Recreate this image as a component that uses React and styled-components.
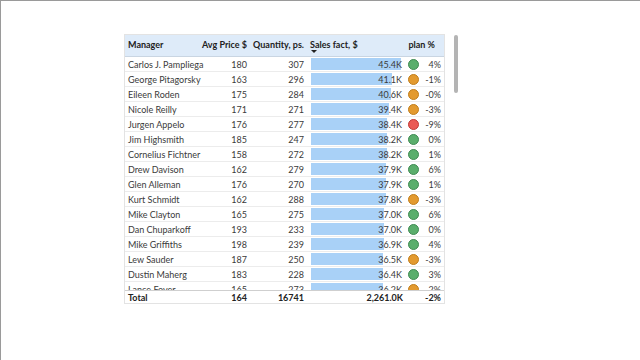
import React from "react";
import styled, { createGlobalStyle } from "styled-components";

const Global = createGlobalStyle`
  html, body { margin: 0; padding: 0; background: #fff; }
  body { font-family: Lato, "Liberation Sans", sans-serif; }
`;

const Page = styled.div`
  width: 640px;
  height: 360px;
  box-sizing: border-box;
  border-top: 1px solid #9a9a9a;
  border-left: 1px solid #9a9a9a;
  padding: 33px 0 0 123px;
  display: flex;
  align-items: flex-start;
  gap: 9px;
`;

const Table = styled.div`
  width: 319px;
  border: 1px solid #e3e3e3;
  font-size: 9px;
  line-height: 1;
  color: #3a3a3a;
`;

const cols = "72px 53px 57px 99px 14px 24px";

const HeadRow = styled.div`
  display: grid;
  grid-template-columns: ${cols};
  height: 21px;
  background: #deebf9;
  border-bottom: 1px solid #c9d5e2;
  font-weight: 700;
  color: #222;
`;

const HeadCell = styled.div`
  display: flex;
  align-items: flex-start;
  padding-top: 5px;
  grid-column: span ${(p) => p.span || 1};
  justify-content: ${(p) => (p.right ? "flex-end" : "flex-start")};
  padding-left: ${(p) => (p.right ? 0 : 3)}px;
  padding-right: ${(p) => (p.right ? p.pr || 3 : 0)}px;
  position: relative;
  white-space: nowrap;
`;

const SortArrow = styled.span`
  position: absolute;
  left: 4px;
  bottom: 3px;
  width: 0;
  height: 0;
  border-left: 3px solid transparent;
  border-right: 3px solid transparent;
  border-top: 3px solid #222;
`;

const Body = styled.div`
  height: 233px;
  overflow: hidden;
`;

const Row = styled.div`
  display: grid;
  grid-template-columns: ${cols};
  height: 15px;
  box-sizing: border-box;
  border-bottom: 1px solid #ececec;
`;

const Cell = styled.div`
  display: flex;
  align-items: center;
  justify-content: ${(p) => (p.right ? "flex-end" : "flex-start")};
  padding: ${(p) => (p.right ? "0 3px 0 0" : "0 0 0 3px")};
  white-space: nowrap;
`;

const BarCell = styled.div`
  position: relative;
  display: flex;
  align-items: center;
  justify-content: flex-end;
  padding-right: 4px;
`;

const Bar = styled.div`
  position: absolute;
  left: 4px;
  top: 1px;
  height: 12px;
  background: #a9d1f7;
`;

const BarText = styled.span`
  position: relative;
`;

const DotCell = styled.div`
  display: flex;
  align-items: center;
  justify-content: center;
`;

const Dot = styled.span`
  width: 11px;
  height: 11px;
  border-radius: 50%;
  box-sizing: border-box;
  background: ${(p) => p.color};
  border: 1px solid ${(p) => p.edge};
`;

const TotalRow = styled.div`
  display: grid;
  grid-template-columns: ${cols};
  height: 12px;
  border-top: 1px solid #cfcfcf;
  font-weight: 700;
  color: #222;
`;

const Scroll = styled.div`
  width: 4px;
  height: 58px;
  margin-top: 1px;
  border-radius: 2px;
  background: #b4b4b4;
`;

const dots = {
  g: ["#5aae6c", "#3f8a52"],
  o: ["#e39a2f", "#c07e1c"],
  r: ["#ea5a55", "#bf3a36"],
};

const rows = [
  ["Carlos J. Pampliega", 180, 307, 45.4, "g", "4%"],
  ["George Pitagorsky", 163, 296, 41.1, "o", "-1%"],
  ["Eileen Roden", 175, 284, 40.6, "o", "-0%"],
  ["Nicole Reilly", 171, 271, 39.4, "o", "-3%"],
  ["Jurgen Appelo", 176, 277, 38.4, "r", "-9%"],
  ["Jim Highsmith", 185, 247, 38.2, "g", "0%"],
  ["Cornelius Fichtner", 158, 272, 38.2, "g", "1%"],
  ["Drew Davison", 162, 279, 37.9, "g", "6%"],
  ["Glen Alleman", 176, 270, 37.9, "g", "1%"],
  ["Kurt Schmidt", 162, 288, 37.8, "o", "-3%"],
  ["Mike Clayton", 165, 275, 37.0, "g", "6%"],
  ["Dan Chuparkoff", 193, 233, 37.0, "g", "0%"],
  ["Mike Griffiths", 198, 239, 36.9, "g", "4%"],
  ["Lew Sauder", 187, 250, 36.5, "o", "-3%"],
  ["Dustin Maherg", 183, 228, 36.4, "g", "3%"],
  ["Lance Foyer", 165, 273, 36.2, "o", "-2%"],
];

export default function App() {
  return (
    <>
      <Global />
      <Page>
        <Table>
          <HeadRow>
            <HeadCell>Manager</HeadCell>
            <HeadCell right>Avg Price $</HeadCell>
            <HeadCell right>Quantity, ps.</HeadCell>
            <HeadCell>
              Sales fact, $
              <SortArrow />
            </HeadCell>
            <HeadCell right span={2} pr={9}>plan %</HeadCell>
          </HeadRow>
          <Body>
            {rows.map(([name, price, qty, sales, dot, plan]) => (
              <Row key={name}>
                <Cell>{name}</Cell>
                <Cell right>{price}</Cell>
                <Cell right>{qty}</Cell>
                <BarCell>
                  <Bar style={{ width: (sales / 45.4) * 90 }} />
                  <BarText>{sales.toFixed(1)}K</BarText>
                </BarCell>
                <DotCell>
                  <Dot color={dots[dot][0]} edge={dots[dot][1]} />
                </DotCell>
                <Cell right>{plan}</Cell>
              </Row>
            ))}
          </Body>
          <TotalRow>
            <Cell>Total</Cell>
            <Cell right>164</Cell>
            <Cell right>16741</Cell>
            <Cell right>2,261.0K</Cell>
            <Cell />
            <Cell right>-2%</Cell>
          </TotalRow>
        </Table>
        <Scroll />
      </Page>
    </>
  );
}
